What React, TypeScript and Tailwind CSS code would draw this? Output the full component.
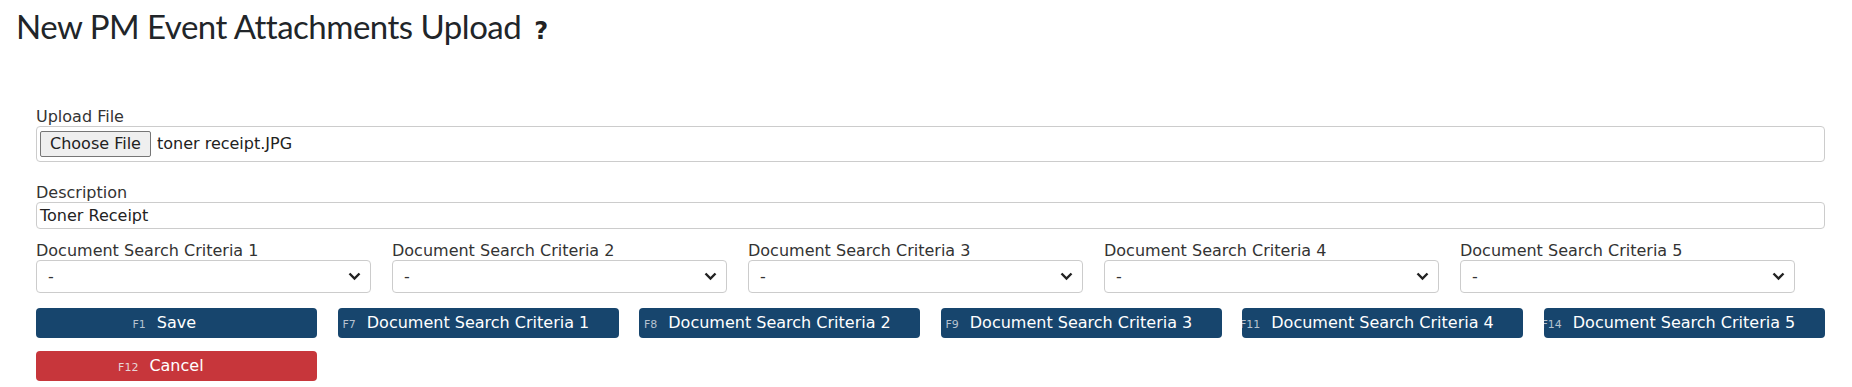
import React from "react";

const criteria = [1, 2, 3, 4, 5];

const actions = [
  { key: "F7", label: "Document Search Criteria 1" },
  { key: "F8", label: "Document Search Criteria 2" },
  { key: "F9", label: "Document Search Criteria 3" },
  { key: "F11", label: "Document Search Criteria 4" },
  { key: "F14", label: "Document Search Criteria 5" },
];

const KeyButton = ({
  fkey,
  label,
  red,
}: {
  fkey: string;
  label: string;
  red?: boolean;
}) => {
  return (
    <button
      className={
        "h-[30px] w-[281px] overflow-hidden rounded-[4px] text-[16px] leading-[30px] text-white flex justify-center " +
        (red ? "bg-[#c7363b]" : "bg-[#17456d]")
      }
    >
      <span className="relative">
        <span
          className={
            "absolute right-full mr-[11px] top-[11px] text-[11px] leading-[11px] " +
            (red ? "text-[#e6d5d6]" : "text-[#b6c2d0]")
          }
        >
          {fkey}
        </span>
        {label}
      </span>
    </button>
  );
};

const App = () => {
  return (
    <div className="w-[1852px] h-[387px] bg-white font-['DejaVu_Sans',sans-serif] text-[#333]">
      <h1 className="pl-[16px] pt-[4px] h-[86px] flex items-baseline font-['Lato',sans-serif] text-[33px] tracking-[-0.5px] leading-[44px] text-[#212529]">
        <span>New PM Event Attachments Upload</span>
        <span className="ml-[13px] font-['DejaVu_Sans',sans-serif] text-[24px] tracking-normal font-bold text-[#222]">
          ?
        </span>
      </h1>

      <div className="pl-[36px] pr-[27px] pt-[21px]">
        <label className="block text-[16px] leading-[19px]">Upload File</label>
        <div className="h-[36px] rounded-[4px] border border-[#ccc] flex items-center pl-[3px]">
          <span className="h-[26px] px-[9px] rounded-[2px] border border-[#767676] bg-[#efefef] text-[16px] leading-[24px] text-[#222]">
            Choose File
          </span>
          <span className="ml-[6px] text-[16px] text-[#222]">toner receipt.JPG</span>
        </div>

        <label className="block mt-[21px] text-[16px] leading-[19px]">Description</label>
        <div className="h-[27px] rounded-[4px] border border-[#ccc] pl-[3px] text-[16px] leading-[25px] text-[#222]">
          Toner Receipt
        </div>

        <div className="mt-[12px] grid grid-cols-[repeat(5,335px)] gap-x-[21px]">
          {criteria.map((n) => (
            <div key={n}>
              <label className="block text-[16px] leading-[19px]">
                Document Search Criteria {n}
              </label>
              <div className="relative">
                <select className="w-full h-[33px] appearance-none rounded-[4px] border border-[#ccc] bg-white pl-[11px] text-[16px] text-[#333]">
                  <option>-</option>
                </select>
                <svg
                  className="pointer-events-none absolute right-[10px] top-[12px]"
                  width="13"
                  height="9"
                  viewBox="0 0 13 9"
                >
                  <path
                    d="M1.5 1.5 L6.5 6.5 L11.5 1.5"
                    fill="none"
                    stroke="#222"
                    strokeWidth="2.4"
                  />
                </svg>
              </div>
            </div>
          ))}
        </div>

        <div className="mt-[15px] flex gap-x-[20.5px]">
          <KeyButton fkey="F1" label="Save" />
          {actions.map((a) => (
            <KeyButton key={a.key} fkey={a.key} label={a.label} />
          ))}
        </div>
        <div className="mt-[13px]">
          <KeyButton fkey="F12" label="Cancel" red />
        </div>
      </div>
    </div>
  );
};

export default App;
